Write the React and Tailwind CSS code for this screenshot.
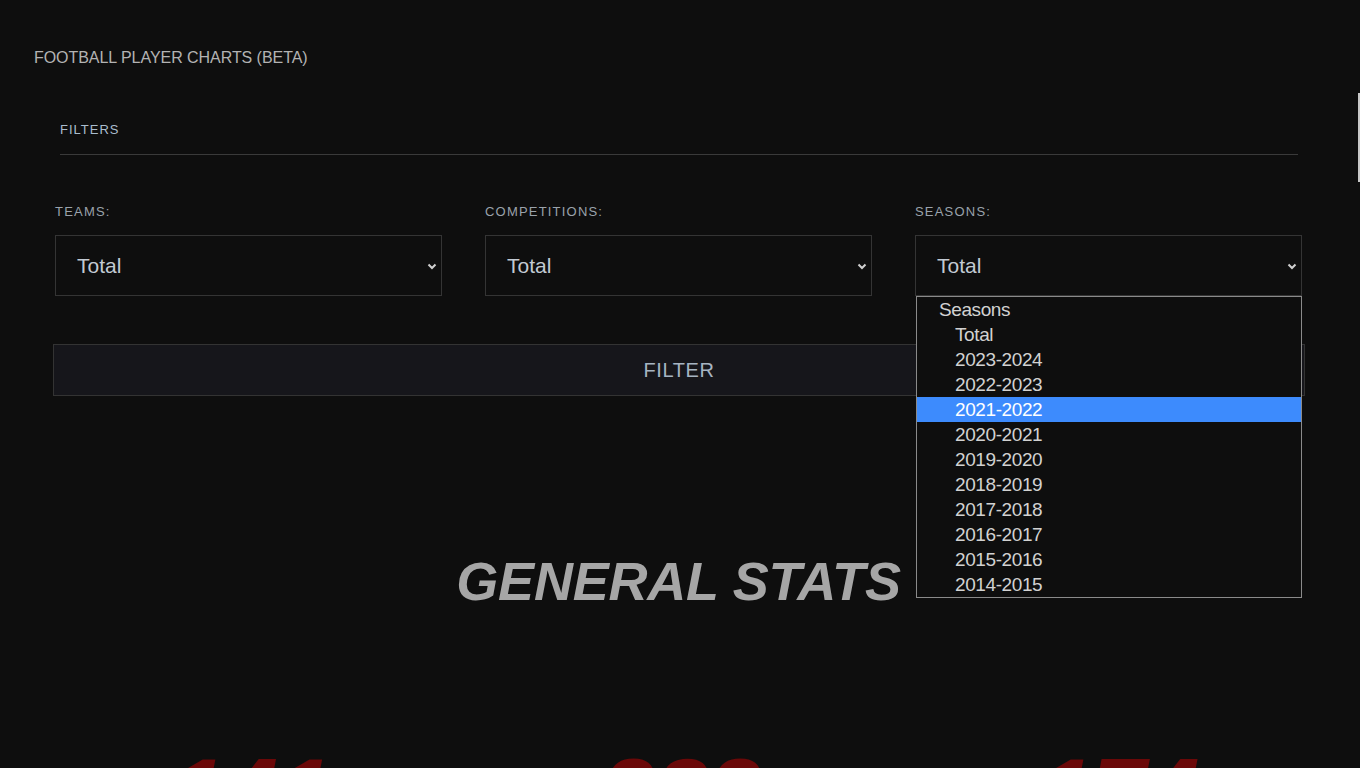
const seasons = [
  'Total',
  '2023-2024',
  '2022-2023',
  '2021-2022',
  '2020-2021',
  '2019-2020',
  '2018-2019',
  '2017-2018',
  '2016-2017',
  '2015-2016',
  '2014-2015',
]

function Chevron() {
  return (
    <svg className="w-[10px] h-[10px]" viewBox="0 0 10 10" fill="none" stroke="#cfcfcf" strokeWidth={2}>
      <path d="M1.5 3.5L5 7L8.5 3.5" />
    </svg>
  )
}

function SelectBox({ label, children }) {
  return (
    <div className="relative">
      <div className="pt-px text-[13px] leading-none tracking-[1.2px] text-[#9aa2ab]">{label}</div>
      <div className="mt-[17px] h-[61px] border border-[#343434] flex items-center justify-between pl-[21px] pr-[4px]">
        <span className="text-[21px] leading-none text-[#c2cad3]">Total</span>
        <Chevron />
      </div>
      {children}
    </div>
  )
}

export default function App() {
  const selected = '2021-2022'

  return (
    <div
      className="min-h-screen bg-[#0e0e0e] pl-[55px] pr-[58px] pb-[200px]"
      style={{ fontFamily: '"Liberation Sans", Arial, sans-serif' }}
    >
      <header className="pt-[50px] -ml-[21px]">
        <h1 className="text-[16px] leading-none tracking-[-0.05px] text-[#b3b3b3]">
          FOOTBALL PLAYER CHARTS (BETA)
        </h1>
      </header>

      <section className="mt-[57px]">
        <div className="pl-[5px] pr-[4px]">
          <div className="text-[13px] leading-none tracking-[1px] text-[#a9bccd]">FILTERS</div>
          <div className="mt-[18px] h-px bg-[#3a3a3a]" />
        </div>

        <div className="mt-[49px] grid grid-cols-3 gap-[43px]">
          <SelectBox label="TEAMS:" />
          <SelectBox label="COMPETITIONS:" />
          <SelectBox label="SEASONS:">
            <div className="absolute z-10 left-[1px] right-0 top-[92px] border border-[#8a8a8a] bg-[#0e0e0e] text-[19px] leading-none tracking-[-0.4px]">
              <div className="h-[25px] flex items-center pl-[22px] text-[#d2d2d2]">Seasons</div>
              {seasons.map((s) => (
                <div
                  key={s}
                  className={
                    s === selected
                      ? 'h-[25px] flex items-center pl-[38px] bg-[#3d8bfd] text-white'
                      : 'h-[25px] flex items-center pl-[38px] text-[#d2d2d2]'
                  }
                >
                  {s}
                </div>
              ))}
            </div>
          </SelectBox>
        </div>

        <button className="mt-[48px] ml-[-2px] w-[calc(100%+5px)] h-[52px] bg-[#16161b] border border-[#333] flex items-center justify-center text-[20px] leading-none tracking-[0.6px] text-[#a6b4c2]">
          FILTER
        </button>
      </section>

      <section className="mt-[158px]">
        <h2 className="text-center text-[54px] leading-none font-bold italic tracking-[-0.2px] text-[#a6a6a6]">
          GENERAL STATS
        </h2>

        <div className="mt-[137px] grid grid-cols-3 gap-[43px] text-center text-[96px] leading-none font-bold italic text-[#6b0808]">
          <div className="pl-[6px]">141</div>
          <div className="pl-[6px]">383</div>
          <div className="pl-[22px]">174</div>
        </div>
      </section>

      <div className="fixed right-0 top-[93px] w-[2px] h-[89px] bg-[#c8c8c8]" />
    </div>
  )
}
